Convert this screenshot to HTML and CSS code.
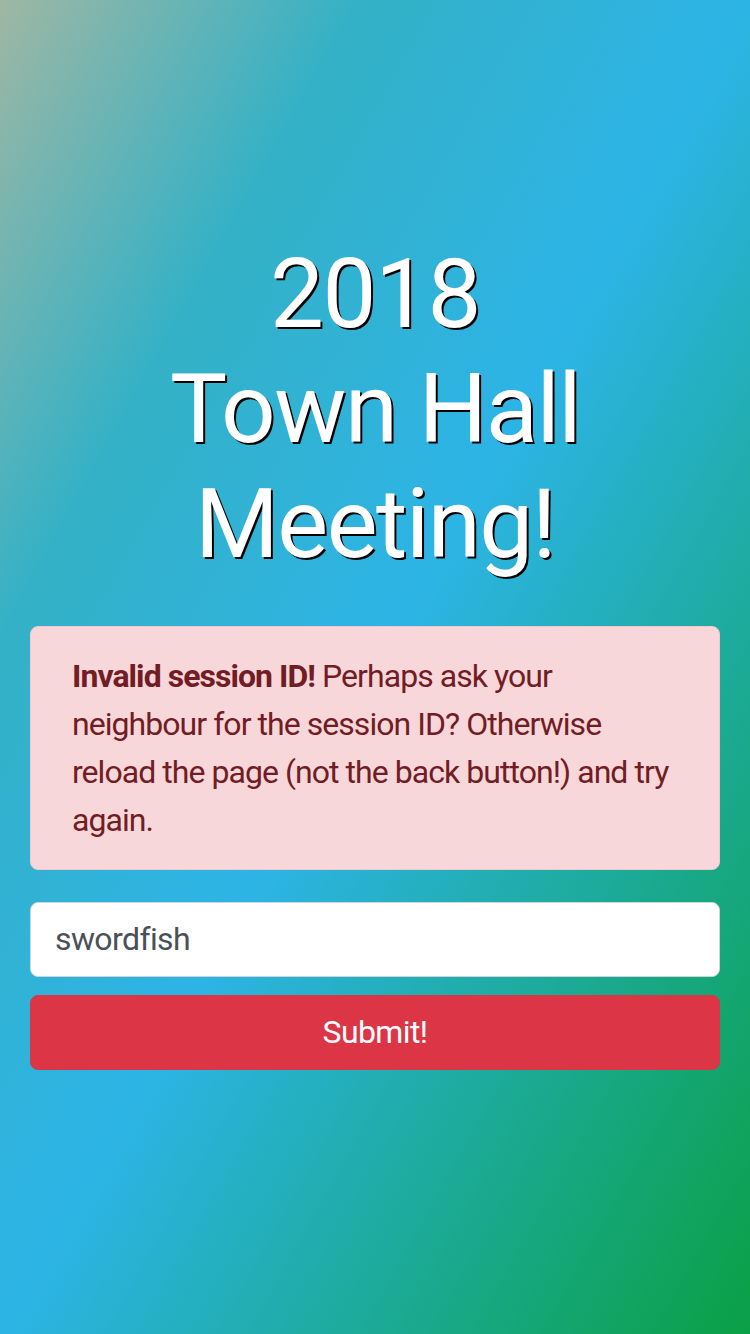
FILE: index.html
```html
<!DOCTYPE html>
<html lang="en">
<head>
<meta charset="utf-8">
<title>2018 Town Hall Meeting!</title>
<link rel="stylesheet" href="styles.css">
</head>
<body>
<main class="page">
  <h1 class="title">2018<br>Town Hall<br>Meeting!</h1>
  <div class="alert">
    <strong>Invalid session ID!</strong> Perhaps ask your neighbour for the session ID? Otherwise reload the page (not the back button!) and try again.
  </div>
  <form class="form">
    <input class="field" type="text" value="swordfish">
    <button class="submit" type="button">Submit!</button>
  </form>
</main>
</body>
</html>
```

FILE: styles.css
```css
html, body {
  margin: 0;
  padding: 0;
  height: 100%;
}
body {
  font-family: "Roboto", "Liberation Sans", sans-serif;
  background: linear-gradient(to bottom right, #9fb7a3 0%, #34b1c6 24%, #2db4e6 50%, #0aa045 100%);
  min-height: 1334px;
}
.page {
  padding: 237px 30px 0;
  display: flex;
  flex-direction: column;
}
.title {
  margin: 0 0 43px;
  font-size: 96px;
  line-height: 115.2px;
  font-weight: 400;
  letter-spacing: -1.5px;
  color: #fff;
  text-align: center;
  text-shadow: 2px 2px 0 #000;
}
.alert {
  background: #f8d7da;
  border: 1px solid #f5c6cb;
  color: #721c24;
  border-radius: 8px;
  padding: 25px 40px 25px 41px;
  font-size: 32px;
  line-height: 48px;
  letter-spacing: -0.95px;
  margin-bottom: 32px;
}
.alert strong {
  font-weight: 700;
}
.form {
  display: flex;
  flex-direction: column;
  gap: 18px;
}
.field {
  box-sizing: border-box;
  height: 75px;
  padding: 12px 24px;
  border: 1px solid #ced4da;
  border-radius: 8px;
  background: #fff;
  color: #495057;
  font-family: inherit;
  font-size: 32px;
  line-height: 48px;
  letter-spacing: -0.6px;
  margin: 0;
}
.submit {
  box-sizing: border-box;
  height: 75px;
  border: 1px solid #dc3545;
  border-radius: 8px;
  background: #dc3545;
  color: #fff;
  font-family: inherit;
  font-size: 32px;
  line-height: 48px;
  letter-spacing: -0.6px;
  padding: 12px 24px;
  margin: 0;
}
```
